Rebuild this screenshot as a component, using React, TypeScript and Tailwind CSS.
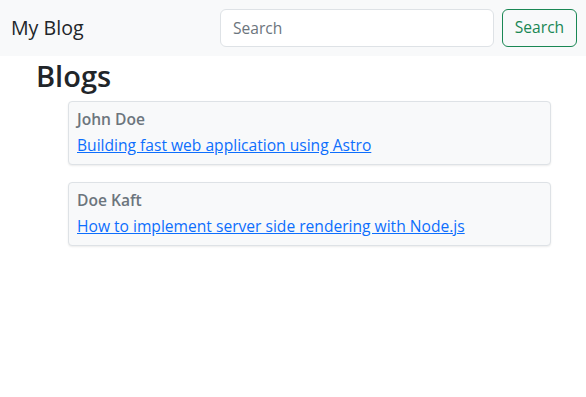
const posts = [
  { author: "John Doe", title: "Building fast web application using Astro" },
  { author: "Doe Kaft", title: "How to implement server side rendering with Node.js" },
];

export default function App() {
  return (
    <div className="min-h-[397px] bg-white text-[#212529] font-['Open_Sans',sans-serif]">
      <nav className="flex h-14 items-center justify-between bg-[#f8f9fa] pl-[11px] pr-[9px]">
        <a className="text-[19.6px] leading-none text-[#212529]">My Blog</a>
        <form className="flex gap-2">
          <input
            placeholder="Search"
            className="h-[38px] w-[274px] rounded-[6px] border border-[#dee2e6] bg-white px-3 text-[15.6px] text-[#212529] placeholder:text-[#6c757d] outline-none"
          />
          <button
            type="button"
            className="h-[38px] w-[75px] rounded-[6px] border border-[#198754] text-[15.6px] text-[#198754]"
          >
            Search
          </button>
        </form>
      </nav>

      <main className="pl-[36px] pr-[35px]">
        <h1 className="mt-[2px] text-[29px] font-semibold leading-[36px]">Blogs</h1>
        <div className="ml-[32px] mt-[7px] flex flex-col gap-[17px]">
          {posts.map((p) => (
            <div
              key={p.author}
              className="h-16 rounded-[4px] border border-[#dee2e6] bg-[#f8f9fa] px-2 pt-[5px] shadow-[0_1px_2px_rgba(0,0,0,0.08)]"
            >
              <p className="text-[15.6px] font-semibold leading-6 text-[#6c757d]">{p.author}</p>
              <a href="#" className="mt-[2px] block text-[15.6px] leading-6 text-[#0d6efd] underline">
                {p.title}
              </a>
            </div>
          ))}
        </div>
      </main>
    </div>
  );
}
